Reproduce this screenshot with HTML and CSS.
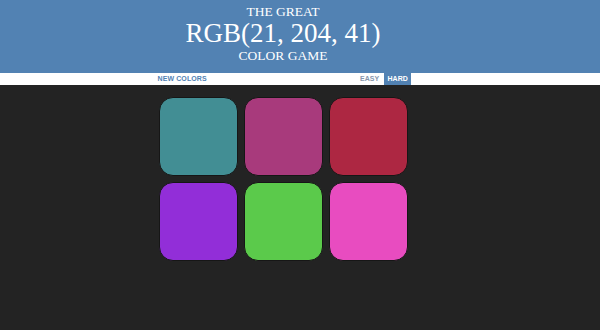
FILE: index.html
```html
<!DOCTYPE html>
<html>
<head>
<meta charset="utf-8">
<link rel="stylesheet" href="styles.css">
</head>
<body>
<header class="masthead">
  <h1 class="title">
    <span class="title-small">THE GREAT</span>
    <span class="title-big">RGB(21, 204, 41)</span>
    <span class="title-small">COLOR GAME</span>
  </h1>
</header>
<nav class="stripe">
  <div class="stripe-inner">
    <button class="btn btn-reset">NEW COLORS</button>
    <span class="spacer"></span>
    <button class="btn btn-mode">EASY</button>
    <button class="btn btn-mode selected">HARD</button>
  </div>
</nav>
<main class="stage">
  <div class="board">
    <div class="square" style="background: #428e94"></div>
    <div class="square" style="background: #a83a7c"></div>
    <div class="square" style="background: #ad2742"></div>
    <div class="square" style="background: #922ed8"></div>
    <div class="square" style="background: #5bca4b"></div>
    <div class="square" style="background: #e84cc0"></div>
  </div>
</main>
</body>
</html>
```

FILE: styles.css
```css
html, body {
  margin: 0;
  padding: 0;
  background: #232323;
}

body {
  width: 600px;
  height: 330px;
  overflow: hidden;
}

.masthead {
  background: #5282b3;
  padding: 4.5px 34px 9px 0;
}

.title {
  margin: 0;
  font-family: "Liberation Serif", "Times New Roman", serif;
  font-weight: normal;
  color: #ffffff;
  text-align: center;
  line-height: 1.1;
}

.title-small {
  display: block;
  font-size: 13.5px;
}

.title-big {
  display: block;
  font-size: 27px;
}

.stripe {
  background: #ffffff;
  height: 12px;
  padding-right: 34px;
}

.stripe-inner {
  width: 256px;
  height: 12px;
  margin: 0 auto;
  display: flex;
  align-items: stretch;
}

.spacer {
  flex: 1;
}

.btn {
  border: none;
  margin: 0;
  background: transparent;
  font-family: "Liberation Sans", Arial, sans-serif;
  font-weight: bold;
  font-size: 7px;
  letter-spacing: 0.1px;
  line-height: 12px;
  padding: 0 3px;
  height: 12px;
  outline: none;
}

.btn-reset {
  color: #5282b3;
  padding-left: 2.5px;
}

.btn-mode {
  color: #8796ab;
  margin-left: 2px;
}

.btn-mode.selected {
  background: #5282b3;
  color: #ffffff;
}

.stage {
  padding: 12px 34px 0 0;
}

.board {
  width: 249px;
  margin: 0 auto;
  display: grid;
  grid-template-columns: repeat(3, 79px);
  grid-auto-rows: 79px;
  gap: 6px;
}

.square {
  border-radius: 14px;
  box-sizing: border-box;
  border: 1px solid #161616;
}
```
